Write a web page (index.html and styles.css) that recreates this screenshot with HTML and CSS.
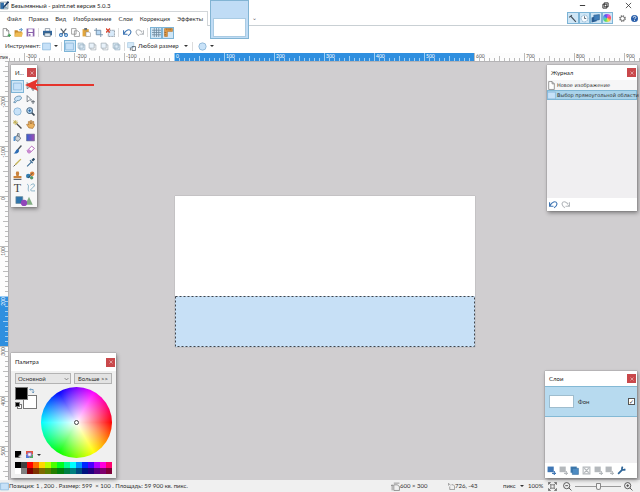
FILE: index.html
```html
<!DOCTYPE html>
<html lang="ru">
<head>
<meta charset="utf-8">
<title>Безымянный - paint.net версия 5.0.3</title>
<link rel="stylesheet" href="styles.css">
</head>
<body>
<svg class="defs" aria-hidden="true">
  <defs>
    <symbol id="app" viewBox="0 0 16 16"><path fill="#fff" stroke="#456" d="M1 2h13v12H1z"/><path fill="#2f6da8" d="M1 3h6v11H1z"/><path fill="none" stroke="#1d3c66" stroke-width="3" d="M15 1 6 12"/><path fill="#8ab" d="M8 10h5v3H8z"/></symbol>
    <symbol id="new" viewBox="0 0 16 16"><path fill="#fff" stroke="#777" stroke-width="1.3" d="M3 1h6l4 4v10H3zM9 1v4h4"/></symbol>
    <symbol id="newp" viewBox="0 0 16 16"><path fill="#fff" stroke="#777" stroke-width="1.3" d="M2 1h6l4 4v10H2zM8 1v4h4"/><path stroke="#49a35b" stroke-width="2" d="M10 13h6M13 10v6"/></symbol>
    <symbol id="open" viewBox="0 0 16 16"><path fill="#c78b2c" d="M1 4h5l2 2h6v9H1z"/><path fill="#f0bd55" d="M3 8h13l-2 7H1z"/><path fill="none" stroke="#357ab8" stroke-width="1.500" d="M9 3h5M12 0l3 3-3 3"/></symbol>
    <symbol id="save" viewBox="0 0 16 16"><path fill="#8b63ad" d="M1 1h14v14H1z"/><path fill="#fff" d="M4 2h8v5H4zM4 9h8v6H4z"/><path fill="#8b63ad" d="M5 11h3v3H5z"/></symbol>
    <symbol id="print" viewBox="0 0 16 16"><path fill="#fff" stroke="#567" d="M4 1h8v5H4z"/><path fill="#32669b" d="M0 5h16v8H0z"/><path fill="#dce9f3" stroke="#456" d="M3 9h10v6H3z"/></symbol>
    <symbol id="cut" viewBox="0 0 16 16"><path fill="none" stroke="#56606b" stroke-width="2" d="M3 1l8 10M13 1 5 11"/><g fill="none" stroke="#2d70b5" stroke-width="2"><circle cx="3.500" cy="12.500" r="2.500"/><circle cx="12.500" cy="12.500" r="2.500"/></g></symbol>
    <symbol id="copy" viewBox="0 0 16 16"><path fill="#fff" stroke="#888" stroke-width="1.300" d="M1 1h8v10H1zM6 5h6l3 3v7H6z"/></symbol>
    <symbol id="paste" viewBox="0 0 16 16"><path fill="#e2a53b" d="M1 2h11v13H1z"/><path fill="#69727a" d="M4 0h5v4H4z"/><path fill="#fff" stroke="#888" d="M7 7h6l2 2v6H7z"/></symbol>
    <symbol id="crop" viewBox="0 0 16 16"><path fill="#b8d8f3" d="M4 4h8v8H4z"/><path fill="none" stroke="#6c8aa4" stroke-width="1.500" d="M4 0v12h12M0 4h12v12"/></symbol>
    <symbol id="desel" viewBox="0 0 16 16"><path fill="#d7eafa" stroke="#6f7a86" stroke-width="1.300" stroke-dasharray="2 1" d="M4 4h11v11H4z"/><path stroke="#d8452f" stroke-width="2.200" d="M0 1l7 7M7 1 0 8"/></symbol>
    <symbol id="undo" viewBox="0 0 16 16"><path fill="none" stroke="currentColor" stroke-width="2" d="M1 4v7h7M1.500 10.500C5 3 12 1 14 6c1 4-2 6-5 8"/></symbol>
    <symbol id="redo" viewBox="0 0 16 16"><path fill="none" stroke="currentColor" stroke-width="2" d="M15 4v7H8M14.500 10.500C11 3 4 1 2 6c-1 4 2 6 5 8"/></symbol>
    <symbol id="grid" viewBox="0 0 16 16"><path fill="none" stroke="#6b879d" stroke-width="1.400" d="M4 0v16M8 0v16M12 0v16M0 4h16M0 8h16M0 12h16"/></symbol>
    <symbol id="rule" viewBox="0 0 16 16"><path fill="#e39b45" stroke="#a96d28" d="M1 1h14v5H6v9H1z"/><path stroke="#76491b" d="M5 1v3M9 1v3M12 1v3M1 8h3M1 12h3"/></symbol>
    <symbol id="sel" viewBox="0 0 16 16"><path fill="#c6e1f8" stroke="#7fb2d8" stroke-width="1.200" d="M1 2h14v12H1z"/></symbol>
    <symbol id="two" viewBox="0 0 16 16"><path fill="#deedf8" stroke="#8fa8ba" stroke-width="1.200" d="M2 2h9v9H2zM5 5h9v9H5z"/></symbol>
    <symbol id="two2" viewBox="0 0 16 16"><path fill="#fff" stroke="#9aa6af" stroke-width="1.200" d="M5 5h9v9H5z"/><path fill="#e8f2fa" stroke="#9aa6af" stroke-width="1.200" d="M2 2h9v9H2z"/></symbol>
    <symbol id="size" viewBox="0 0 16 16"><path fill="#d5e9f8" stroke="#9ac1de" d="M1 1h11v9H1z"/><path fill="none" stroke="#46515b" stroke-width="1.300" d="M9 8h6v7H9zM6 10v5"/></symbol>
    <symbol id="lasso" viewBox="0 0 16 16"><path fill="#c8e2f6" stroke="#5a87a8" stroke-width="1.400" d="M4 10C0 6 6 1 13 2c5 3 0 9-6 8l-3 4-3-1 3-3"/></symbol>
    <symbol id="ell" viewBox="0 0 16 16"><circle cx="8" cy="8" r="6.500" fill="#c8e2f8" stroke="#79a7cd" stroke-width="1.200"/></symbol>
    <symbol id="move" viewBox="0 0 16 16"><path fill="#fff" stroke="#4f5962" stroke-width="1.300" d="M2 1l8 8H6l-4 3z"/><path stroke="#4f5962" stroke-width="1.500" d="M9 12h7M12.500 9v7"/></symbol>
    <symbol id="zoomt" viewBox="0 0 16 16"><path stroke="#414f5c" stroke-width="3" d="M10 10l5 5"/><circle cx="6.500" cy="6.500" r="5" fill="#b8dcf5" stroke="#526d88" stroke-width="1.800"/><path stroke="#2861a0" stroke-width="1.500" d="M4 6.500h5M6.500 4v5"/></symbol>
    <symbol id="wand" viewBox="0 0 16 16"><path stroke="#4a4a4a" stroke-width="2.500" d="M6 6l9 9"/><path stroke="#c0ad4e" stroke-width="1.500" d="M4 0v9M0 4h9M1 1l6 6M7 1 1 7"/></symbol>
    <symbol id="hand" viewBox="0 0 16 16"><path fill="#edb35f" stroke="#9b6428" d="M5 14 1 8l2-1 2 2-1-6 2-1 2 5V1h2v6l2-5 2 1-1 5 2-1v3l-3 5z"/></symbol>
    <symbol id="bucket" viewBox="0 0 16 16"><path fill="#ccd2d8" stroke="#5c6874" stroke-width="1.300" d="M7 4l7 5-5 6-6-4zM8 6V1h3v6"/><path fill="#4b8ed0" d="M1 7c4-4 6 0 3 1v6H1z"/></symbol>
    <symbol id="grad" viewBox="0 0 16 16"><path fill="url(#gr)" stroke="#555f80" d="M1 2h14v12H1z"/></symbol>
    <linearGradient id="gr"><stop stop-color="#345fd0"/><stop offset="1" stop-color="#a24cb4"/></linearGradient>
    <symbol id="brush" viewBox="0 0 16 16"><path stroke="#4a535d" stroke-width="2.500" d="M15 1 8 9"/><path fill="#2c6cb5" d="M8 7l3 3c-1 4-5 6-10 5 4-2 3-6 7-8"/></symbol>
    <symbol id="erase" viewBox="0 0 16 16"><path fill="#fff" stroke="#aa4fb3" stroke-width="1.500" d="M2 10l8-8 5 4-8 8H4z"/><path fill="#c98bd0" d="M2 10l3-3 5 4-3 3H4z"/></symbol>
    <symbol id="pencil" viewBox="0 0 16 16"><path stroke="#c6b458" stroke-width="2.500" d="M14 2 4 12"/><path stroke="#444" stroke-width="1.500" d="M4 12l-3 3"/></symbol>
    <symbol id="pick" viewBox="0 0 16 16"><path stroke="#284966" stroke-width="4" d="M15 1l-4 4"/><path stroke="#3f6f98" stroke-width="2" d="M7 4l5 5M10 7l-8 8"/></symbol>
    <symbol id="stamp" viewBox="0 0 16 16"><path fill="#c9823c" d="M6 1h4l1 3-1 5h5v4H1V9h5L5 4z"/><path fill="#5d6670" d="M1 14h14v2H1z"/></symbol>
    <symbol id="recolor" viewBox="0 0 16 16"><circle cx="11" cy="5" r="4" fill="#e38538"/><circle cx="4" cy="9" r="4" fill="#347eb0"/><circle cx="10" cy="12" r="3" fill="#55966a"/><path stroke="#444" stroke-width="1.500" d="M12 3 4 12"/></symbol>
    <symbol id="line" viewBox="0 0 16 16"><path fill="none" stroke="#7aa9c2" stroke-width="1.600" d="M2 2c5 2 0 8 3 13M8 4c7-6 10 1 3 5-7 6 1 5 5 5"/></symbol>
    <symbol id="shapes" viewBox="0 0 28 16"><path fill="#2e74ac" stroke="#6d8794" d="M1 1h11v11H1z"/><path fill="#82ad83" d="M22 1l6 13H16z"/><circle cx="14" cy="11" r="5" fill="#9246ba"/></symbol>
    <symbol id="hammer" viewBox="0 0 16 16"><path fill="none" stroke="#46515c" stroke-width="2" d="M2 6l5-4M5 4l9 10"/></symbol>
    <symbol id="clock" viewBox="0 0 16 16"><circle cx="8" cy="8" r="6" fill="#f7fbff" stroke="#6d9dbf" stroke-width="1.500" stroke-dasharray="2 1"/><path fill="none" stroke="#345" stroke-width="1.300" d="M8 4v4h3"/></symbol>
    <symbol id="layers" viewBox="0 0 16 16"><path fill="#285a91" d="M1 6l9-2v9l-9 2z"/><path fill="#407eb9" stroke="#275987" d="M5 2l10-1v9L5 12z"/></symbol>
    <symbol id="gear" viewBox="0 0 16 16"><circle cx="8" cy="8" r="6" fill="none" stroke="#555" stroke-width="3" stroke-dasharray="2.700 2"/><circle cx="8" cy="8" r="4.700" fill="#fff" stroke="#555" stroke-width="1.500"/></symbol>
    <symbol id="help" viewBox="0 0 16 16"><circle cx="8" cy="8" r="8" fill="#285eaa"/><path fill="none" stroke="#fff" stroke-width="2" d="M5 6c0-4 6-4 6 0 0 2-3 2-3 4"/><circle cx="8" cy="12.500" r="1.200" fill="#fff"/></symbol>
    <symbol id="x" viewBox="0 0 16 16"><path fill="none" stroke="currentColor" stroke-width="1.800" d="M2 2l12 12M14 2 2 14"/></symbol>
    <symbol id="min" viewBox="0 0 16 16"><path stroke="#222" stroke-width="2" d="M2 8h12"/></symbol>
    <symbol id="rest" viewBox="0 0 16 16"><path fill="#fff" stroke="#222" stroke-width="2" d="M5 2h9v9H5zM2 5h9v9H2z"/></symbol>
    <symbol id="swap" viewBox="0 0 16 16"><path fill="none" stroke="#4f87b3" stroke-width="2" d="M2 4h9v9M5 1 2 4l3 3M8 10l3 3 3-3"/></symbol>
    <symbol id="lay" viewBox="0 0 16 16"><path fill="currentColor" d="M1 1h11v10H1z"/><path stroke="currentColor" stroke-width="2" d="M9 13h7M13 9v7"/></symbol>
    <symbol id="dup" viewBox="0 0 16 16"><path fill="#3d79ad" d="M1 1h11v11H1z"/><path fill="#4d8bc2" stroke="#31689a" d="M4 4h11v11H4z"/></symbol>
    <symbol id="merge" viewBox="0 0 16 16"><path fill="none" stroke="currentColor" stroke-width="2" d="M2 2h12v12H2zM4 4l8 8M12 4l-8 8"/></symbol>
    <symbol id="wrench" viewBox="0 0 16 16"><path stroke="#2e6497" stroke-width="3" d="M2 14 10 6"/><path fill="none" stroke="#2e6497" stroke-width="3" d="M10 1c-3 5 0 7 5 5"/></symbol>
    <symbol id="fit" viewBox="0 0 16 16"><path fill="none" stroke="#666" stroke-width="1.500" d="M5 5h6v6H5zM1 1l4 4M15 1l-4 4M1 15l4-4M15 15l-4-4M1 5V1h4M11 1h4v4M1 11v4h4M11 15h4v-4"/></symbol>
    <symbol id="zout" viewBox="0 0 16 16"><path fill="none" stroke="#444" stroke-width="1.500" d="M10.500 10.500 15 15M4 6.500h5M12 6.500a5.500 5.500 0 1 1-11 0 5.500 5.500 0 0 1 11 0"/></symbol>
    <symbol id="zin" viewBox="0 0 16 16"><path fill="none" stroke="#444" stroke-width="1.500" d="M10.500 10.500 15 15M4 6.500h5M6.500 4v5M12 6.500a5.500 5.500 0 1 1-11 0 5.500 5.500 0 0 1 11 0"/></symbol>
    <symbol id="dims" viewBox="0 0 16 16"><path fill="none" stroke="#777" stroke-width="1.300" d="M5 5h6l4 3v7H5zM2 5v10M0 7l2-2 2 2M5 2h10"/></symbol>
    <symbol id="pos" viewBox="0 0 16 16"><path fill="none" stroke="#666" stroke-width="1.300" d="M1 1l5 4M1 1v5M4 8v7h11V7l-3-3H8"/></symbol>
    <symbol id="addc" viewBox="0 0 16 16"><path d="M0 0h14v15H0z"/><path stroke="#fff" stroke-width="2" d="M8 12h8M12 8v8"/></symbol>
    <symbol id="pal" viewBox="0 0 16 16"><path fill="#e5533d" d="M0 0h16v8H0z"/><path fill="#4c7ddb" d="M0 8h8v8H0z"/><path fill="#4dac60" d="M8 8h8v8H8z"/><path fill="#fff" stroke="#8a63be" stroke-width="2" d="M4 4h8v8H4z"/></symbol>
    <pattern id="ht" width="50" height="8" patternUnits="userSpaceOnUse"><path class="tick" d="M.5 0v8M5.500 5v3M10.500 5v3M15.500 5v3M20.500 5v3M25.500 3v5M30.500 5v3M35.500 5v3M40.500 5v3M45.500 5v3"/></pattern>
    <pattern id="vt" width="8" height="50" patternUnits="userSpaceOnUse"><path class="tick" d="M0 .5h8M5 5.500h3M5 10.500h3M5 15.500h3M5 20.500h3M3 25.500h5M5 30.500h3M5 35.500h3M5 40.500h3M5 45.500h3"/></pattern>
  </defs>
</svg>

<header class="head">
  <div class="title">
    <svg class="i"><use href="#app"/></svg><h1>Безымянный - paint.net версия 5.0.3</h1>
    <div class="winbtns">
      <button aria-label="Свернуть"><svg class="i s"><use href="#min"/></svg></button>
      <button aria-label="Восстановить"><svg class="i s"><use href="#rest"/></svg></button>
      <button aria-label="Закрыть"><svg class="i s"><use href="#x"/></svg></button>
    </div>
  </div>
  <div class="menurow">
    <nav class="menu"><button>Файл</button><button>Правка</button><button>Вид</button><button>Изображение</button><button>Слои</button><button>Коррекция</button><button>Эффекты</button></nav>
    <div class="utils">
      <div class="cells toggles">
        <button class="on" aria-label="Инструменты"><svg class="i"><use href="#hammer"/></svg></button>
        <button class="on" aria-label="Журнал"><svg class="i"><use href="#clock"/></svg></button>
        <button class="on" aria-label="Слои"><svg class="i"><use href="#layers"/></svg></button>
        <button class="on" aria-label="Палитра"><span class="miniwheel"></span></button>
      </div>
      <button class="util" aria-label="Параметры"><svg class="i s"><use href="#gear"/></svg></button>
      <button class="util" aria-label="Справка"><svg class="i s"><use href="#help"/></svg></button>
    </div>
  </div>
  <button class="doc" aria-label="Безымянный"><span></span></button>
  <button class="docmore" aria-label="Список изображений">⌄</button>
</header>

<div class="bar">
  <div class="cells three"><button aria-label="Создать"><svg class="i"><use href="#newp"/></svg></button><button aria-label="Открыть"><svg class="i"><use href="#open"/></svg></button><button aria-label="Сохранить"><svg class="i"><use href="#save"/></svg></button></div>
  <i class="sep"></i>
  <div class="cells one"><button aria-label="Печать"><svg class="i"><use href="#print"/></svg></button></div>
  <i class="sep"></i>
  <div class="cells five"><button aria-label="Вырезать"><svg class="i"><use href="#cut"/></svg></button><button aria-label="Копировать"><svg class="i"><use href="#copy"/></svg></button><button aria-label="Вставить"><svg class="i"><use href="#paste"/></svg></button><button aria-label="Обрезать"><svg class="i"><use href="#crop"/></svg></button><button aria-label="Снять выделение"><svg class="i"><use href="#desel"/></svg></button></div>
  <i class="sep"></i>
  <div class="cells two"><button class="blue" aria-label="Отменить"><svg class="i"><use href="#undo"/></svg></button><button class="gray" aria-label="Вернуть"><svg class="i"><use href="#redo"/></svg></button></div>
  <i class="sep"></i>
  <div class="cells two"><button class="on" aria-label="Сетка"><svg class="i"><use href="#grid"/></svg></button><button class="on" aria-label="Линейки"><svg class="i"><use href="#rule"/></svg></button></div>
</div>

<div class="bar opts">
  <span class="lbl">Инструмент:</span>
  <button class="drop" aria-label="Прямоугольник"><svg class="i"><use href="#sel"/></svg><b class="tri"></b></button>
  <i class="sep"></i>
  <div class="cells five"><button class="on" aria-label="Заменить"><svg class="i"><use href="#sel"/></svg></button><button aria-label="Добавить"><svg class="i"><use href="#two"/></svg></button><button aria-label="Вычесть"><svg class="i"><use href="#two2"/></svg></button><button aria-label="Пересечь"><svg class="i"><use href="#two2"/></svg></button><button aria-label="Инвертировать"><svg class="i"><use href="#two"/></svg></button></div>
  <i class="sep"></i>
  <svg class="i"><use href="#size"/></svg>
  <select class="plain size" aria-label="Режим размера"><option>Любой размер</option></select><b class="tri"></b>
  <i class="sep wide"></i>
  <button class="drop" aria-label="Качество"><svg class="i"><use href="#ell"/></svg><b class="tri"></b></button>
</div>

<main class="work">
  <div class="corner">пик</div>
  <div class="hruler">
    <svg width="2000" height="8" viewBox="-850 0 2000 8">
      <path class="rsel" d="M0 0h300v8H0z"/>
      <path fill="url(#ht)" d="M-850 0H0v8h-850zM300 0h850v8H300z"/>
      <path class="wt" d="M.5 0v8M50.500 0v8M100.500 0v8M150.500 0v8M200.500 0v8M250.500 0v8M25.500 3v5M75.500 3v5M125.500 3v5M175.500 3v5M225.500 3v5M275.500 3v5"/>
      <path class="wt dash" d="M5 6.500h295"/>
      <g class="nums"><text x="-148" y="5">-300</text><text x="-98" y="5">-200</text><text x="-48" y="5">-100</text><text x="302" y="5">600</text><text x="352" y="5">700</text><text x="402" y="5">800</text><text x="452" y="5">900</text></g>
      <g class="nums w"><text x="2" y="5">0</text><text x="52" y="5">100</text><text x="102" y="5">200</text><text x="152" y="5">300</text><text x="202" y="5">400</text><text x="252" y="5">500</text></g>
    </svg>
  </div>
  <div class="vruler">
    <svg width="8" height="1000" viewBox="0 -425 8 1000">
      <path fill="url(#vt)" d="M0-425h8V100H0zM0 150h8v425H0z"/>
      <path class="rsel" d="M0 100h8v50H0z"/>
      <path class="wt" d="M0 100.500h8M3 125.500h5"/><path class="wt dash" d="M6.500 105v45"/>
      <g class="nums v"><text transform="translate(5 -99) rotate(-90)">-200</text><text transform="translate(5 -49) rotate(-90)">-100</text><text transform="translate(5 1) rotate(-90)">0</text><text transform="translate(5 51) rotate(-90)">100</text><text class="w" transform="translate(5 101) rotate(-90)">200</text><text transform="translate(5 151) rotate(-90)">300</text><text transform="translate(5 201) rotate(-90)">400</text><text transform="translate(5 251) rotate(-90)">500</text></g>
    </svg>
  </div>
  <div class="stage">
    <div class="sheet"><svg class="ants" width="300" height="51"><rect x=".5" y=".5" width="299" height="50"/></svg></div>
  </div>

  <section class="win tools">
    <div class="wt-bar"><h2>И...</h2><button class="close" aria-label="Закрыть"><svg><use href="#x"/></svg></button></div>
    <div class="toolgrid">
      <button class="on" aria-label="Прямоугольное выделение"><svg class="i"><use href="#sel"/></svg></button><button aria-label="Перемещение"><svg class="i"><use href="#move"/></svg></button>
      <button aria-label="Лассо"><svg class="i"><use href="#lasso"/></svg></button><button aria-label="Перемещение выделения"><svg class="i"><use href="#move"/></svg></button>
      <button aria-label="Овальное выделение"><svg class="i"><use href="#ell"/></svg></button><button aria-label="Масштаб"><svg class="i"><use href="#zoomt"/></svg></button>
      <button aria-label="Волшебная палочка"><svg class="i"><use href="#wand"/></svg></button><button aria-label="Рука"><svg class="i"><use href="#hand"/></svg></button>
      <button aria-label="Заливка"><svg class="i"><use href="#bucket"/></svg></button><button aria-label="Градиент"><svg class="i"><use href="#grad"/></svg></button>
      <button aria-label="Кисть"><svg class="i"><use href="#brush"/></svg></button><button aria-label="Ластик"><svg class="i"><use href="#erase"/></svg></button>
      <button aria-label="Карандаш"><svg class="i"><use href="#pencil"/></svg></button><button aria-label="Пипетка"><svg class="i"><use href="#pick"/></svg></button>
      <button aria-label="Штамп"><svg class="i"><use href="#stamp"/></svg></button><button aria-label="Перекрашивание"><svg class="i"><use href="#recolor"/></svg></button>
      <button class="t" aria-label="Текст">T</button><button aria-label="Линия"><svg class="i"><use href="#line"/></svg></button>
      <button class="span" aria-label="Фигуры"><svg class="shapes"><use href="#shapes"/></svg></button>
    </div>
  </section>

  <svg class="arrow" viewBox="0 0 70 12" aria-hidden="true"><path fill="#e5342c" d="M0 6 13 0l-2 5h58v2H11l2 5z"/></svg>

  <section class="win history">
    <div class="wt-bar"><h2>Журнал</h2><button class="close" aria-label="Закрыть"><svg><use href="#x"/></svg></button></div>
    <ul><li><svg class="i"><use href="#new"/></svg>Новое изображение</li><li class="cur"><svg class="i"><use href="#sel"/></svg>Выбор прямоугольной области</li></ul>
    <div class="foot"><button class="blue" aria-label="Отменить"><svg class="i"><use href="#undo"/></svg></button><button class="gray" aria-label="Вернуть"><svg class="i"><use href="#redo"/></svg></button></div>
  </section>

  <section class="win colors">
    <div class="wt-bar"><h2>Палитра</h2><button class="close" aria-label="Закрыть"><svg><use href="#x"/></svg></button></div>
    <div class="cbody">
      <div class="crow"><div class="selwrap"><select aria-label="Активный цвет"><option>Основной</option></select><svg viewBox="0 0 8 5"><path d="M1 1l3 3 3-3"/></svg></div><button class="more">Больше &gt;&gt;</button></div>
      <div class="cmid">
        <div class="cleft">
          <div class="swatches"><span class="bg"></span><span class="fg"></span><svg class="swap"><use href="#swap"/></svg><span class="mw"></span><span class="mb"></span></div>
          <div class="cbtn"><button aria-label="Добавить цвет"><svg class="i s"><use href="#addc"/></svg></button><button aria-label="Палитры"><svg class="i s"><use href="#pal"/></svg></button><b class="tri"></b></div>
        </div>
        <div class="wheel"><span></span></div>
      </div>
      <div class="strip" id="strip"></div>
    </div>
  </section>

  <section class="win lay">
    <div class="wt-bar"><h2>Слои</h2><button class="close" aria-label="Закрыть"><svg><use href="#x"/></svg></button></div>
    <label class="layer"><span class="thumb"></span><span class="name">Фон</span><input type="checkbox" checked></label>
    <div class="empty"></div>
    <div class="foot cells"><button class="blue" aria-label="Новый слой"><svg class="i"><use href="#lay"/></svg></button><button class="gray" aria-label="Удалить слой"><svg class="i"><use href="#lay"/></svg></button><button aria-label="Копия слоя"><svg class="i"><use href="#dup"/></svg></button><button class="gray" aria-label="Объединить"><svg class="i"><use href="#merge"/></svg></button><button class="gray" aria-label="Выше"><svg class="i"><use href="#lay"/></svg></button><button class="gray" aria-label="Ниже"><svg class="i"><use href="#lay"/></svg></button><button aria-label="Свойства"><svg class="i"><use href="#wrench"/></svg></button></div>
  </section>
</main>

<footer class="status">
  <svg class="i"><use href="#sel"/></svg><span class="info">Позиция: 1 , 200 . Размер: 599&nbsp; × 100 . Площадь: 59 900 кв. пикс.</span>
  <span class="st a"><svg class="i"><use href="#dims"/></svg>600 × 300</span>
  <span class="st b"><svg class="i s"><use href="#pos"/></svg>726, -43</span>
  <span class="st c"><select class="plain" aria-label="Единицы"><option>пикс</option></select><b class="tri"></b></span>
  <span class="st d">100%</span>
  <button aria-label="По размеру окна"><svg class="i"><use href="#fit"/></svg></button>
  <button aria-label="Уменьшить"><svg class="i"><use href="#zout"/></svg></button>
  <input type="range" aria-label="Масштаб" min="0" max="100" value="51">
  <button aria-label="Увеличить"><svg class="i"><use href="#zin"/></svg></button>
</footer>
<script src="app.js"></script>
</body>
</html>
```
FILE: styles.css
```css
* { box-sizing: border-box; }
html, body { height: 100%; }
body { margin: 0; display: flex; flex-direction: column; overflow: hidden; background: #fff; color: #303030; font: 6px/8px Lato, Roboto, sans-serif; }
button, select, input { margin: 0; padding: 0; border: 0; background: none; color: inherit; font: inherit; }
button { display: flex; align-items: center; justify-content: center; }
h1, h2 { margin: 0; font: inherit; color: #222; }
.defs { position: absolute; width: 0; height: 0; }
.i { width: 9px; height: 9px; flex: none; display: block; }
.i.s { width: 7px; height: 7px; }
.blue { color: #3f76b4; }
.gray { color: #b4b8bc; }
.on { background: #cfe6f6; box-shadow: inset 0 0 0 1px #7db4d6; }
.tri { width: 0; height: 0; border: 2px solid transparent; border-top-color: #333; border-bottom: 0; flex: none; }

.head { position: relative; }
.title { height: 11px; display: flex; align-items: center; gap: 2px; }
.title h1 { flex: 1; }
.winbtns { display: flex; }
.winbtns button { width: 23px; height: 11px; }
.menurow { height: 15px; display: flex; justify-content: space-between; border-bottom: 1px solid #c9d0d4; }
.menu { display: flex; justify-content: space-between; width: 208px; height: 15px; padding: 0 4px 0 7px; border: 1px solid #d2d6d9; border-width: 1px 1px 0 0; background: #fff; }
.utils { display: flex; align-items: center; }
.cells { display: flex; }
.cells button { flex: 1; height: 12px; }
.toggles { width: 46px; margin-right: 3px; }
.util { width: 12px; height: 12px; }
.miniwheel { width: 8px; height: 8px; border-radius: 50%; background: conic-gradient(from 90deg, #f55, #fd5, #5d6, #5bd, #55e, #d5d, #f55); }
.doc { position: absolute; left: 210px; top: 0; width: 39px; height: 39px; padding: 0 3px 2px; border: 1px solid #82b4d3; background: #c0dcf5; align-items: flex-end; }
.doc span { flex: 1; height: 17px; background: #fff; box-shadow: 0 0 0 1px #a9cbe3; }
.docmore { position: absolute; left: 250px; top: 14px; width: 8px; height: 8px; color: #666; }

.bar { height: 13px; display: flex; align-items: center; }
.three { width: 36px; }
.one { width: 12px; }
.two { width: 24px; }
.five { width: 58px; }
.sep { width: 5px; height: 9px; background: linear-gradient(#dcdcdc, #dcdcdc) center / 1px 100% no-repeat; }
.sep.wide { width: 9px; }
.opts { height: 14px; padding-left: 5px; }
.lbl { width: 36px; white-space: nowrap; }
.drop { gap: 3px; width: 18px; }
.plain { appearance: none; }
.size { width: 46px; height: 10px; margin-left: 2px; }

.work { position: relative; flex: 1; display: grid; grid-template: 8px 1fr / 8px 1fr; min-height: 0; }
.corner { overflow: hidden; font-size: 5px; background: #fafafa; }
.hruler { overflow: hidden; display: flex; justify-content: center; background: #fdfdfd; }
.vruler { overflow: hidden; display: flex; flex-direction: column; justify-content: center; background: #fdfdfd; }
.hruler svg, .vruler svg { flex: none; display: block; }
.tick { stroke: #bcbcbc; }
.rsel { fill: #2f8fdf; }
.wt { stroke: #9bcdf5; fill: none; }
.dash { stroke-width: 3; stroke-dasharray: 1 4; }
.nums { font-size: 5px; fill: #555; }
.nums.w, .nums .w { fill: #fff; }
.v text { text-anchor: end; }
.stage { background: #d0ced0; display: grid; place-items: center; overflow: hidden; border: 1px solid #b4b3b5; border-width: 1px 0 0 1px; }
.sheet { width: 300px; height: 151px; background: #fff; box-shadow: 0 0 1px #888; display: flex; align-items: flex-end; }
.ants { display: block; background: #c7e0f6; }
.ants rect { fill: none; stroke: #40454b; stroke-dasharray: 2 2; }

.win { position: absolute; display: flex; flex-direction: column; background: #fff; box-shadow: 0 0 1px #666, 1px 2px 4px #0006; }
.wt-bar { height: 15px; flex: none; display: flex; align-items: center; justify-content: space-between; padding: 0 1px 0 4px; background: #fff; }
.close { width: 9px; height: 9px; background: #c9484b; color: #fff; }
.close svg { width: 4px; height: 4px; }
.tools { left: 11px; top: 12px; width: 26px; height: 142px; background: #f7f7f8; }
.toolgrid { flex: 1; display: grid; grid-template-columns: 1fr 1fr; grid-auto-rows: 1fr; }
.toolgrid button { min-height: 0; }
.t { font: 12px/12px "Liberation Serif", serif; color: #444; }
.span { grid-column: 1 / 3; }
.shapes { width: 18px; height: 10px; }
.arrow { position: absolute; left: 25px; top: 26px; width: 70px; height: 12px; }
.history { right: 3px; top: 12px; width: 90px; height: 146px; }
.history ul { flex: 1; margin: 0; padding: 0; list-style: none; background: #f0eff1; font: 5px/8px "DejaVu Sans", sans-serif; }
.history li { display: flex; align-items: center; gap: 1px; height: 10px; white-space: nowrap; background: #f6f6f7; }
.history .cur { background: #a9d3ea; box-shadow: inset 0 0 0 1px #7eb7d6; }
.foot { height: 13px; flex: none; display: flex; align-items: center; gap: 3px; padding: 0 2px; }

.colors { left: 11px; bottom: 2px; width: 105px; height: 125px; }
.colors .wt-bar { height: 18px; }
.cbody { flex: 1; display: flex; flex-direction: column; padding: 2px 4px 4px; background: #f0f0f0; }
.crow { display: flex; gap: 3px; height: 11px; }
.selwrap { position: relative; flex: 1; display: flex; }
.selwrap select { appearance: none; width: 100%; padding-left: 2px; border: 1px solid #b3b3b3; background: #e5e5e5; }
.selwrap svg { position: absolute; right: 2px; top: 4px; width: 5px; height: 4px; fill: none; stroke: #555; pointer-events: none; }
.more { width: 38px; border: 1px solid #b3b3b3; background: #e3e3e3; }
.cmid { flex: 1; display: flex; justify-content: space-between; padding: 3px 0 4px; }
.cleft { display: flex; flex-direction: column; justify-content: space-between; }
.swatches { position: relative; width: 22px; height: 22px; }
.swatches span { position: absolute; border: 1px solid #777; }
.fg { left: 0; top: 0; width: 13px; height: 13px; background: #000; }
.bg { right: 0; bottom: 0; width: 14px; height: 14px; background: #fff; }
.mw { left: 2px; bottom: 0; width: 5px; height: 5px; background: #fff; }
.mb { left: 0; bottom: 2px; width: 5px; height: 5px; background: #000; }
.swap { position: absolute; right: 2px; top: 1px; width: 6px; height: 6px; }
.cbtn { display: flex; align-items: center; gap: 4px; }
.wheel { width: 71px; height: 71px; border-radius: 50%; display: grid; place-items: center; background: radial-gradient(closest-side, #fff, #fff0), conic-gradient(from 90deg, #f00, #ff0, #0f0, #0ff, #00f, #f0f, #f00); }
.wheel span { width: 5px; height: 5px; border: 1px solid #444; border-radius: 50%; background: #fff; }
.strip { display: grid; grid-template-columns: repeat(16, 1fr); height: 12px; }

.lay { right: 3px; bottom: 2px; width: 92px; height: 107px; }
.layer { height: 31px; display: flex; align-items: center; gap: 4px; padding: 0 2px 0 4px; border: 1px solid #84b9d5; border-width: 1px 0; background: #b7daef; }
.thumb { width: 25px; height: 13px; background: #fff; border: 1px solid #9fbdce; }
.name { flex: 1; }
.layer input { appearance: none; display: grid; place-items: center; width: 7px; height: 7px; border: 1px solid #555; background: #fff; }
.layer input:checked::after { content: "✓"; font: 6px/5px "DejaVu Sans", sans-serif; color: #333; }
.empty { flex: 1; background: #f0eff1; }
.lay .foot { height: 15px; gap: 0; padding: 0 10px 0 1px; }

.status { height: 12px; flex: none; display: flex; align-items: center; background: #f0f0f0; white-space: nowrap; }
.status button { width: 15px; }
.info { flex: 1; }
.st { display: flex; align-items: center; }
.a { width: 57px; }
.b { width: 55px; }
.c { width: 25px; }
.c select { width: 17px; height: 8px; }
.d { width: 17px; }
input[type=range] { appearance: none; width: 46px; height: 8px; background: linear-gradient(#999, #999) center / 100% 1px no-repeat; }
input[type=range]::-webkit-slider-thumb { appearance: none; width: 5px; height: 7px; border: 1px solid #888; border-radius: 1px 1px 3px 3px; background: #f5f5f5; }
.status button:last-child { margin-right: 4px; }
```
FILE: app.js
```js
const colors = [
  '#000', '#404040', '#f00', '#ff6a00', '#ffd800', '#b6ff00', '#4cff00', '#00ff21',
  '#00ff90', '#0ff', '#0094ff', '#0026ff', '#4800ff', '#b200ff', '#ff00dc', '#ff006e',
  '#fff', '#808080', '#7f0000', '#7f3300', '#7f6a00', '#5b7f00', '#267f00', '#007f0e',
  '#007f46', '#007f7f', '#004a7f', '#00137f', '#21007f', '#57007f', '#7f006e', '#7f0037'
];
const strip = document.getElementById('strip');
for (const c of colors) {
  const b = document.createElement('button');
  b.style.background = c;
  b.setAttribute('aria-label', c);
  strip.append(b);
}
```
